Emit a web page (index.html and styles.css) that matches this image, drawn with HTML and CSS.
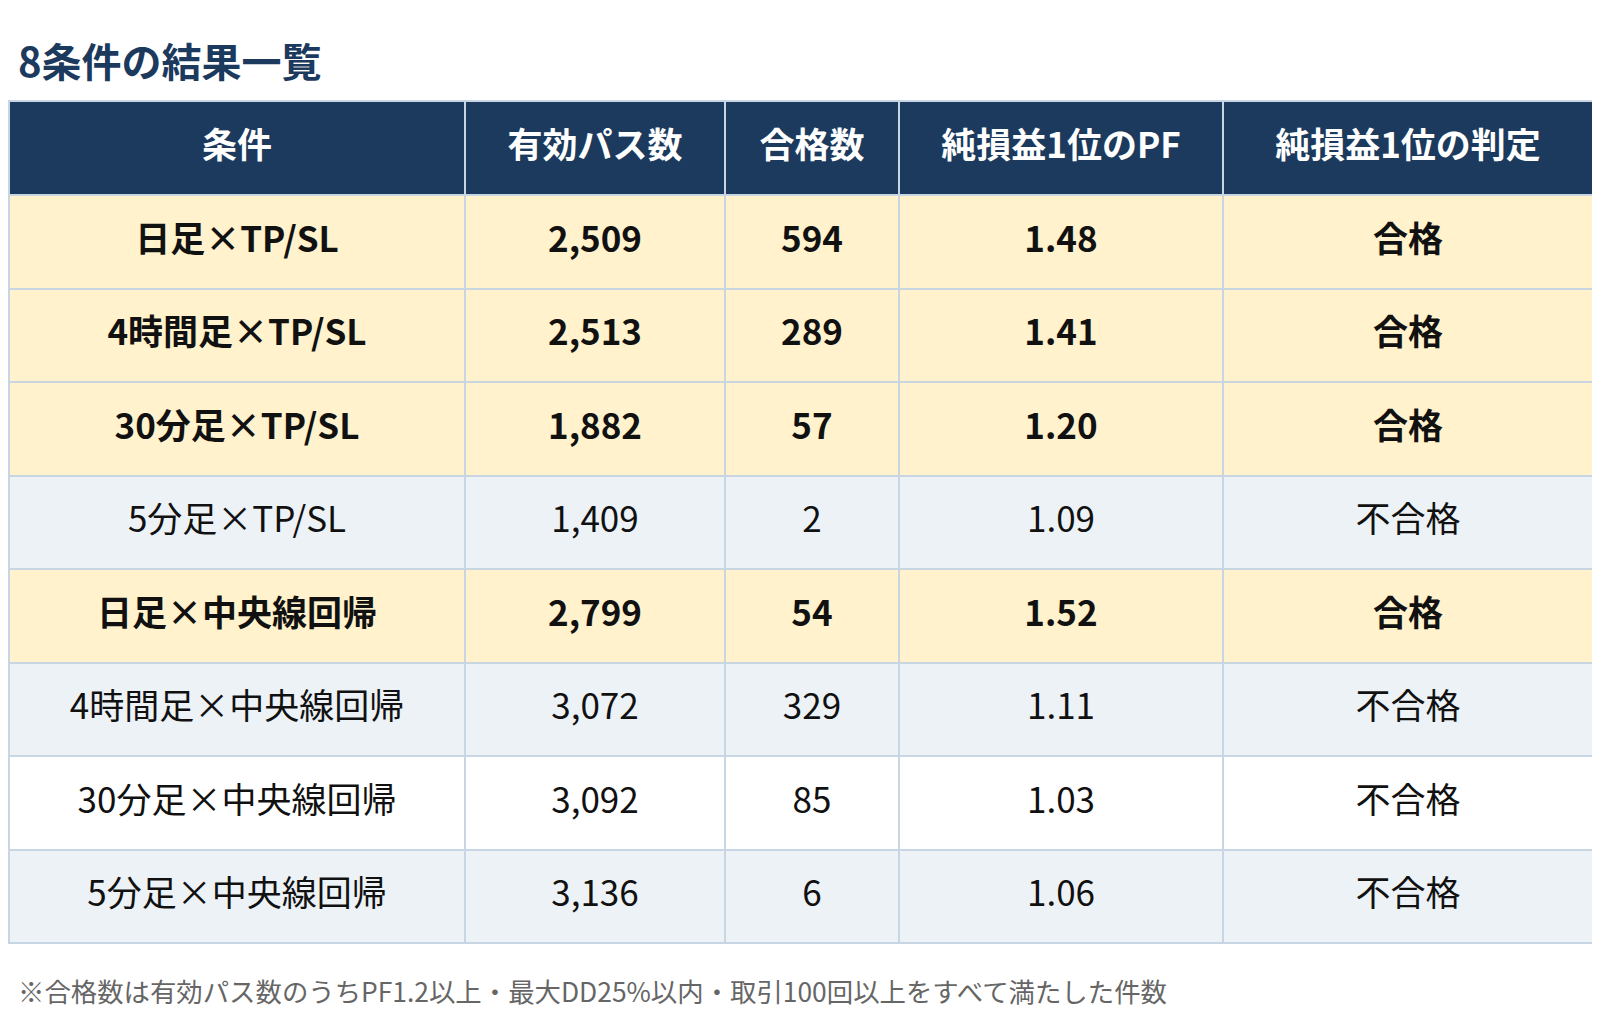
FILE: index.html
```html
<!DOCTYPE html>
<html lang="ja">
<head>
<meta charset="utf-8">
<title>8条件の結果一覧</title>
<link rel="stylesheet" href="styles.css">
</head>
<body>
<div class="page">
  <h2 class="title">8条件の結果一覧</h2>
  <table class="results">
    <colgroup>
      <col class="c1"><col class="c2"><col class="c3"><col class="c4"><col class="c5">
    </colgroup>
    <thead>
      <tr>
        <th>条件</th><th>有効パス数</th><th>合格数</th><th>純損益1位のPF</th><th>純損益1位の判定</th>
      </tr>
    </thead>
    <tbody>
      <tr class="pass"><td>日足×TP/SL</td><td>2,509</td><td>594</td><td>1.48</td><td>合格</td></tr>
      <tr class="pass"><td>4時間足×TP/SL</td><td>2,513</td><td>289</td><td>1.41</td><td>合格</td></tr>
      <tr class="pass"><td>30分足×TP/SL</td><td>1,882</td><td>57</td><td>1.20</td><td>合格</td></tr>
      <tr class="alt"><td>5分足×TP/SL</td><td>1,409</td><td>2</td><td>1.09</td><td>不合格</td></tr>
      <tr class="pass"><td>日足×中央線回帰</td><td>2,799</td><td>54</td><td>1.52</td><td>合格</td></tr>
      <tr class="alt"><td>4時間足×中央線回帰</td><td>3,072</td><td>329</td><td>1.11</td><td>不合格</td></tr>
      <tr><td>30分足×中央線回帰</td><td>3,092</td><td>85</td><td>1.03</td><td>不合格</td></tr>
      <tr class="alt"><td>5分足×中央線回帰</td><td>3,136</td><td>6</td><td>1.06</td><td>不合格</td></tr>
    </tbody>
  </table>
  <p class="note">※合格数は有効パス数のうちPF1.2以上・最大DD25%以内・取引100回以上をすべて満たした件数</p>
</div>
</body>
</html>
```

FILE: styles.css
```css
html, body {
  background: #ffffff;
}

body {
  margin: 8px;
  font-family: "Noto Sans CJK JP", "Noto Sans", sans-serif;
  color: #111111;
}

.page {
  width: 1584px;
}

.title {
  margin: 28px 0 16px 0;
  padding-left: 10px;
  font-size: 40px;
  line-height: 48px;
  font-weight: 700;
  color: #1c3a5d;
}

.results {
  border-collapse: collapse;
  width: 1584px;
  table-layout: fixed;
  border: 2px solid #c8d5e3;
}

.c1 { width: 456px; }
.c2 { width: 260px; }
.c3 { width: 174px; }
.c4 { width: 324px; }
.c5 { width: 370px; }

.results th,
.results td {
  border: 2px solid #c8d5e3;
  text-align: center;
  vertical-align: middle;
  font-size: 35px;
  line-height: 42px;
  padding: 0 0 10px 0;
}

.results th {
  background: #1c3a5d;
  color: #ffffff;
  font-weight: 700;
  height: 82px;
}

.results td {
  height: 81.5px;
  font-weight: 400;
  background: #ffffff;
}

.results tr.alt td {
  background: #edf2f7;
}

.results tr.pass td {
  background: #fff2cc;
  font-weight: 700;
}

.note {
  margin: 27px 0 0 0;
  padding-left: 10px;
  font-size: 26.4px;
  line-height: 40px;
  color: #666666;
}
```
